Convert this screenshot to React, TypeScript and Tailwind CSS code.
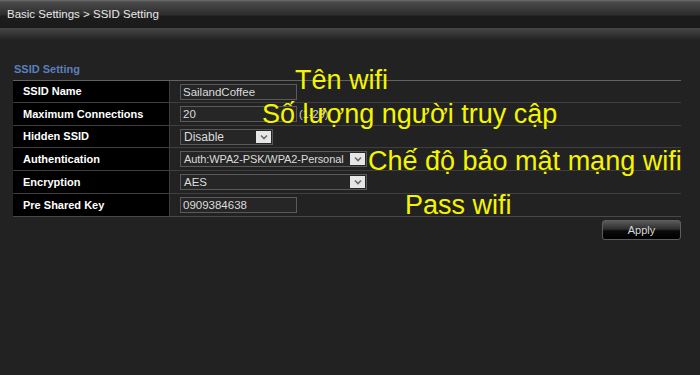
import React from "react";

const Chevron = () => (
  <svg width="8" height="6" viewBox="0 0 8 6" className="block">
    <polyline points="1,1.5 4,4.5 7,1.5" fill="none" stroke="#6a6a6a" strokeWidth="1.6" />
  </svg>
);

const Select = ({ width, text, size }: { width: string; text: string; size: string }) => (
  <div className={`${width} h-[16px] border border-[#5a5a5a] bg-[#262626] flex items-stretch`}>
    <div className={`flex-1 overflow-hidden whitespace-nowrap pl-[3px] ${size} leading-[14px] text-[#dcdcdc]`}>{text}</div>
    <div className="w-[15px] m-[1px] bg-[#e6e6e6] flex items-center justify-center">
      <Chevron />
    </div>
  </div>
);

const Input = ({ value }: { value: string }) => (
  <div className="w-[117px] h-[16px] border border-[#5a5a5a] bg-[#262626] pl-[2px] text-[11.5px] leading-[14px] text-[#dcdcdc] whitespace-nowrap overflow-hidden">
    {value}
  </div>
);

const rows: { label: string; h: string; content: React.ReactNode }[] = [
  { label: "SSID Name", h: "h-[21px]", content: <Input value="SailandCoffee" /> },
  {
    label: "Maximum Connections",
    h: "h-[22px]",
    content: (
      <div className="flex items-center gap-[2px]">
        <Input value="20" />
        <span className="text-[11px] text-[#cfcfcf]">(1-20)</span>
      </div>
    ),
  },
  { label: "Hidden SSID", h: "h-[21px]", content: <Select width="w-[93px]" text="Disable" size="text-[12px]" /> },
  {
    label: "Authentication",
    h: "h-[22px]",
    content: <Select width="w-[187px]" text="Auth:WPA2-PSK/WPA2-Personal" size="text-[11px] tracking-[-0.1px]" />,
  },
  { label: "Encryption", h: "h-[22px]", content: <Select width="w-[187px]" text="AES" size="text-[11.5px]" /> },
  { label: "Pre Shared Key", h: "h-[22px]", content: <Input value="0909384638" /> },
];

export default function App() {
  return (
    <div className="relative w-[700px] h-[375px] overflow-hidden bg-[#222222] font-['Liberation_Sans',Arial,sans-serif]">
      <div className="h-[28px] bg-[linear-gradient(to_bottom,#6e6e6e_0px,#4a4a4a_2px,#3a3a3a_9px,#2c2c2c_15px,#1c1c1c_16px,#1b1b1b_28px)] flex items-center pl-[7px]">
        <span className="text-[11.5px] text-[#e8e8e8] leading-none pt-[2px]">Basic Settings &gt; SSID Setting</span>
      </div>
      <div className="h-[12px] bg-[linear-gradient(to_bottom,#474747_0px,#3a3a3a_4px,#262626_11px,#222222_12px)]" />
      <div className="px-[13px]">
        <div className="mt-[21px] h-[16px] leading-[16px] pl-[1px] text-[11px] font-bold text-[#5b7fbd]">SSID Setting</div>
        <div className="mt-[3px] w-[668px] border-t border-[#626262]">
          {rows.map((r, i) => (
            <div
              key={r.label}
              className={`flex ${r.h} box-content border-b ${i === rows.length - 1 ? "border-[#484848]" : "border-[#3e3e3e]"}`}
            >
              <div className="w-[156px] bg-black flex items-center pl-[10px] text-[11px] font-bold text-white whitespace-nowrap">
                {r.label}
              </div>
              <div className="w-[1px] bg-[#3e3e3e]" />
              <div className="flex-1 flex items-center pl-[10px]">{r.content}</div>
            </div>
          ))}
        </div>
        <div className="w-[668px] flex justify-end mt-[3px]">
          <div className="w-[79px] h-[20px] rounded-[3px] border border-[#5e5e5e] bg-[linear-gradient(to_bottom,#5a5a5a_0%,#2e2e2e_45%,#0a0a0a_55%,#000000_100%)] flex items-center justify-center text-[11px] text-[#d8d8d8]">
            Apply
          </div>
        </div>
      </div>

      <div className="absolute left-[295px] top-[67px] text-[27px] leading-none text-[#f5f500] whitespace-nowrap">Tên wifi</div>
      <div className="absolute left-[262px] top-[101px] text-[27px] leading-none text-[#f5f500] whitespace-nowrap">Số lượng người truy cập</div>
      <div className="absolute left-[368px] top-[148px] text-[27px] leading-none text-[#f5f500] whitespace-nowrap">Chế độ bảo mật mạng wifi</div>
      <div className="absolute left-[405px] top-[192px] text-[27px] leading-none text-[#f5f500] whitespace-nowrap">Pass wifi</div>
    </div>
  );
}
